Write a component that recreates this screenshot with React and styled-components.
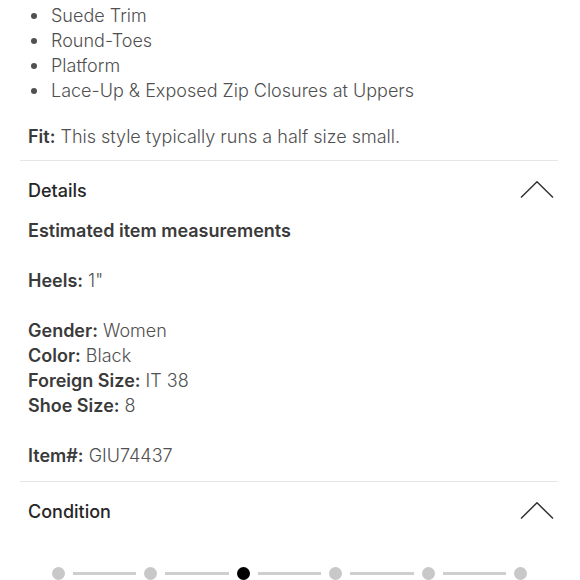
import React from "react";
import styled, { createGlobalStyle } from "styled-components";

const Global = createGlobalStyle`
  html, body { margin: 0; padding: 0; background: #fff; }
  body { font-family: Inter, "Liberation Sans", Arial, sans-serif; -webkit-font-smoothing: antialiased; }
`;

const Page = styled.div`
  width: 580px;
  height: 580px;
  overflow: hidden;
  padding: 3px 22px 0 20px;
  box-sizing: border-box;
  color: #505050;
  font-size: 18px;
  font-weight: 300;
  line-height: 25px;
`;

const Bullets = styled.ul`
  list-style: none;
  margin: 0;
  padding: 0 0 0 31px;
`;

const BulletItem = styled.li`
  position: relative;
  &::before {
    content: "";
    position: absolute;
    left: -20px;
    top: 10px;
    width: 6px;
    height: 6px;
    border-radius: 50%;
    background: #505050;
  }
`;

const Para = styled.p`
  margin: ${(p) => p.$mt || 0}px 0 0 8px;
  min-height: 25px;
`;

const Label = styled.span`
  font-weight: 600;
  color: #3a3a3a;
`;

const Divider = styled.hr`
  border: none;
  border-top: 1.5px solid #e6e6e6;
  margin: ${(p) => p.$mt}px 0 0 0;
`;

const SectionHead = styled.div`
  display: flex;
  align-items: center;
  justify-content: space-between;
  margin-top: ${(p) => p.$mt}px;
  padding: 0 4px 0 8px;
  height: 25px;
`;

const SectionTitle = styled.h2`
  margin: 0;
  font-size: 18px;
  font-weight: 500;
  color: #262626;
`;

const SubTitle = styled.h3`
  margin: 15px 0 0 8px;
  font-size: 18px;
  font-weight: 600;
  color: #3a3a3a;
  line-height: 25px;
`;

const Stepper = styled.div`
  display: flex;
  align-items: center;
  margin: 43px 0 0 32px;
  width: 475px;
`;

const Dot = styled.span`
  flex: none;
  width: 13px;
  height: 13px;
  border-radius: 50%;
  background: ${(p) => (p.$active ? "#000" : "#c8c8c8")};
`;

const Track = styled.span`
  flex: 1;
  height: 3px;
  background: #cfcfcf;
  margin: 0 8px;
`;

const Chevron = () => (
  <svg width="34" height="19" viewBox="0 0 34 19" fill="none">
    <path d="M1 16.5 L17 0.8 L33 16.5" stroke="#333" strokeWidth="1.5" />
  </svg>
);

const Row = ({ label, value }) => (
  <Para>
    <Label>{label}</Label> {value}
  </Para>
);

export default function App() {
  const steps = [0, 1, 2, 3, 4, 5];
  return (
    <>
      <Global />
      <Page>
        <Bullets>
          <BulletItem>Suede Trim</BulletItem>
          <BulletItem>Round-Toes</BulletItem>
          <BulletItem>Platform</BulletItem>
          <BulletItem>Lace-Up &amp; Exposed Zip Closures at Uppers</BulletItem>
        </Bullets>
        <Para $mt={21}>
          <Label>Fit:</Label> This style typically runs a half size small.
        </Para>
        <Divider $mt={11} />
        <SectionHead $mt={17}>
          <SectionTitle>Details</SectionTitle>
          <Chevron />
        </SectionHead>
        <SubTitle>Estimated item measurements</SubTitle>
        <Para />
        <Row label="Heels:" value={'1"'} />
        <Para />
        <Row label="Gender:" value="Women" />
        <Row label="Color:" value="Black" />
        <Row label="Foreign Size:" value="IT 38" />
        <Row label="Shoe Size:" value="8" />
        <Para />
        <Row label="Item#:" value="GIU74437" />
        <Divider $mt={13} />
        <SectionHead $mt={17}>
          <SectionTitle>Condition</SectionTitle>
          <Chevron />
        </SectionHead>
        <Stepper>
          {steps.map((i) => (
            <React.Fragment key={i}>
              {i > 0 && <Track />}
              <Dot $active={i === 2} />
            </React.Fragment>
          ))}
        </Stepper>
      </Page>
    </>
  );
}
